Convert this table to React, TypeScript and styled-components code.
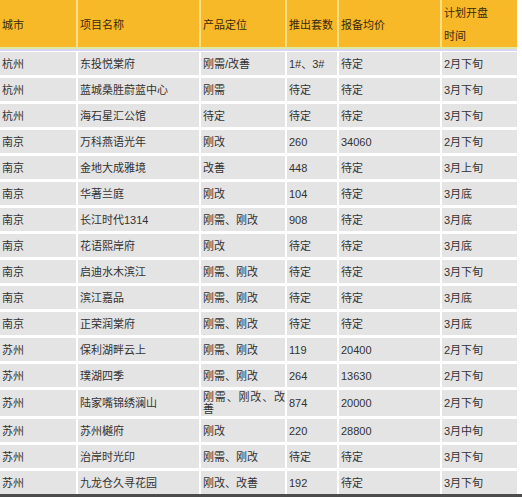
import { createGlobalStyle, styled } from "styled-components";

const GlobalStyle = createGlobalStyle`
  html, body {
    margin: 0;
    padding: 0;
    background: #ffffff;
  }
  body {
    font-family: "Liberation Sans", "Noto Sans CJK SC", sans-serif;
    font-size: 11px;
  }
`;

const COLUMNS = "76px 121px 84px 50px 101px 75px";

const Table = styled.div`
  width: 517px;
  display: flex;
  flex-direction: column;
`;

const HeaderRow = styled.div`
  display: grid;
  grid-template-columns: ${COLUMNS};
  column-gap: 2px;
  height: 47px;
  background: #f6df86;
`;

const HeaderCell = styled.div`
  background: #f8b928;
  color: #3a2a0c;
  padding: 2px 0 0 2px;
  display: flex;
  align-items: center;
  line-height: 23px;
  white-space: pre-line;
`;

const Divider = styled.div`
  height: 2px;
  background: #dde9a2;
  border-bottom: 2px solid #d7d5f1;
`;

const Body = styled.div`
  display: grid;
  grid-template-columns: ${COLUMNS};
  column-gap: 2px;
  row-gap: 3px;
  padding-top: 1px;
`;

const Cell = styled.div`
  background: #e4e4e4;
  color: #333333;
  min-height: 23px;
  padding: 1px 0 1px 2px;
  box-sizing: border-box;
  display: flex;
  align-items: center;
  line-height: 12px;
  text-align: justify;
`;

const BottomRule = styled.div`
  height: 3px;
  margin-top: 0;
  background: #4d4d4d;
  width: 522px;
`;

const headers = ["城市", "项目名称", "产品定位", "推出套数", "报备均价", "计划开盘\n时间"];

const rows: string[][] = [
  ["杭州", "东投悦棠府", "刚需/改善", "1#、3#", "待定", "2月下旬"],
  ["杭州", "蓝城桑胜蔚蓝中心", "刚需", "待定", "待定", "3月下旬"],
  ["杭州", "海石星汇公馆", "待定", "待定", "待定", "3月下旬"],
  ["南京", "万科燕语光年", "刚改", "260", "34060", "2月下旬"],
  ["南京", "金地大成雅境", "改善", "448", "待定", "3月上旬"],
  ["南京", "华著兰庭", "刚改", "104", "待定", "3月底"],
  ["南京", "长江时代1314", "刚需、刚改", "908", "待定", "3月底"],
  ["南京", "花语熙岸府", "刚改", "待定", "待定", "3月底"],
  ["南京", "启迪水木滨江", "刚需、刚改", "待定", "待定", "3月下旬"],
  ["南京", "滨江嘉品", "刚需、刚改", "待定", "待定", "3月底"],
  ["南京", "正荣润棠府", "刚需、刚改", "待定", "待定", "3月底"],
  ["苏州", "保利湖畔云上", "刚需、刚改", "119", "20400", "2月下旬"],
  ["苏州", "璞湖四季", "刚需、刚改", "264", "13630", "2月下旬"],
  ["苏州", "陆家嘴锦绣澜山", "刚需、刚改、改善", "874", "20000", "2月下旬"],
  ["苏州", "苏州樾府", "刚改", "220", "28800", "3月中旬"],
  ["苏州", "治岸时光印", "刚需、刚改", "待定", "待定", "3月下旬"],
  ["苏州", "九龙仓久寻花园", "刚改、改善", "192", "待定", "3月下旬"],
];

export default function App() {
  return (
    <>
      <GlobalStyle />
      <Table>
        <HeaderRow>
          {headers.map((h) => (
            <HeaderCell key={h}>{h}</HeaderCell>
          ))}
        </HeaderRow>
        <Divider />
        <Body>
          {rows.map((row, i) =>
            row.map((value, j) => <Cell key={`${i}-${j}`}>{value}</Cell>)
          )}
        </Body>
      </Table>
      <BottomRule />
    </>
  );
}
